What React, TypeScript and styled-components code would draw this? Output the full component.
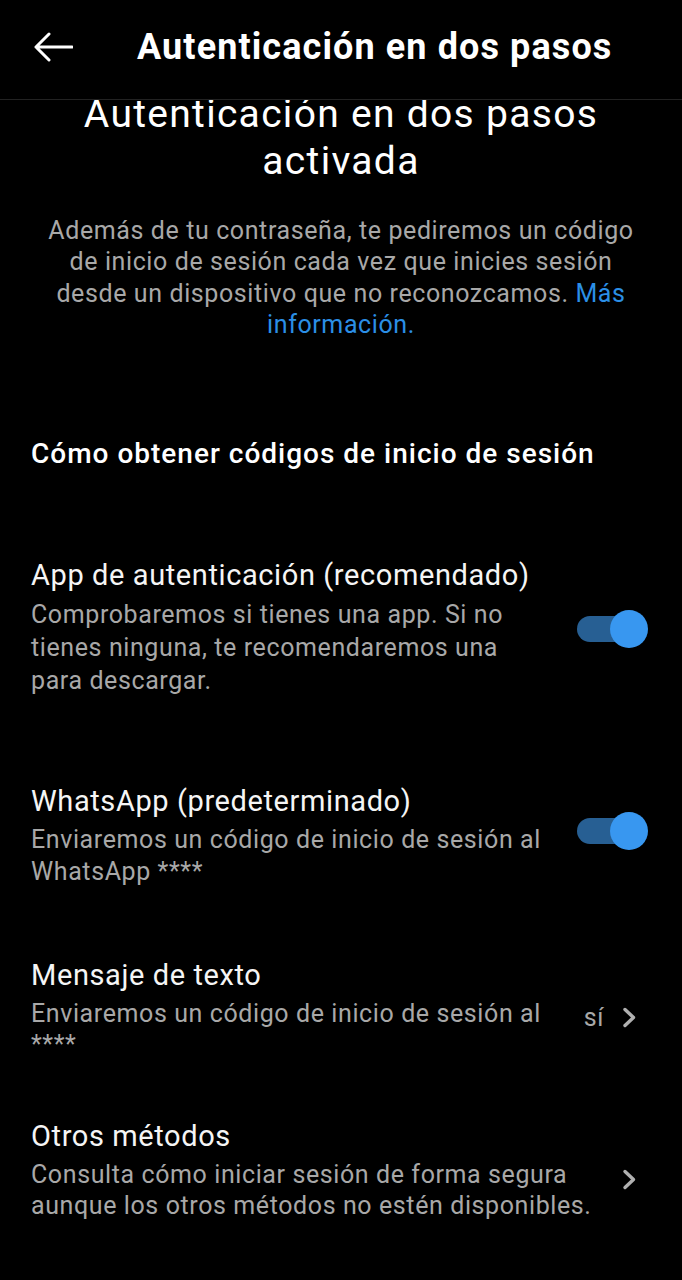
import React from "react";
import styled, { createGlobalStyle } from "styled-components";

const Global = createGlobalStyle`
  html, body { margin: 0; padding: 0; background: #000; }
  body { font-family: Roboto, "Noto Sans", Arial, sans-serif; -webkit-font-smoothing: antialiased; }
  * { box-sizing: border-box; }
`;

const Screen = styled.div`
  width: 682px;
  height: 1280px;
  background: #000;
  color: #f5f5f5;
  display: flex;
  flex-direction: column;
  overflow: hidden;
`;

const Header = styled.header`
  height: 100px;
  flex-shrink: 0;
  display: flex;
  align-items: center;
  padding: 0 0 6px 33px;
  border-bottom: 1px solid #222;
  position: relative;
  z-index: 1;
  background: #000;
`;

const BackButton = styled.button`
  width: 40px;
  height: 32px;
  padding: 0;
  border: 0;
  background: none;
  display: flex;
  align-items: center;
  justify-content: center;
  margin-right: 64px;
  cursor: pointer;
`;

const HeaderTitle = styled.h1`
  margin: 0;
  font-size: 36px;
  font-weight: 700;
  color: #fff;
  letter-spacing: 1.1px;
`;

const Content = styled.main`
  display: flex;
  flex-direction: column;
`;

const BigTitle = styled.h2`
  margin: -9px 0 0;
  font-size: 39px;
  line-height: 47px;
  font-weight: 400;
  letter-spacing: 1.3px;
  text-align: center;
  color: #fff;
`;

const Description = styled.p`
  margin: 30px 0 0;
  padding: 0 40px;
  font-size: 25px;
  line-height: 31.3px;
  letter-spacing: 0.6px;
  text-align: center;
  color: #a8a8a8;
`;

const Link = styled.a`
  color: #2b8fe6;
  text-decoration: none;
`;

const SectionHeading = styled.h3`
  margin: 97px 0 0;
  padding-left: 31px;
  font-size: 28px;
  line-height: 34px;
  font-weight: 500;
  letter-spacing: 1px;
  color: #fff;
`;

const Row = styled.div<{ $top: number }>`
  display: flex;
  align-items: center;
  gap: 26px;
  margin-top: ${(p) => p.$top}px;
  padding: 0 34px 0 31px;
`;

const RowText = styled.div`
  flex: 1;
  min-width: 0;
  display: flex;
  flex-direction: column;
`;

const RowTitle = styled.div`
  font-size: 29px;
  line-height: 36px;
  letter-spacing: 0.6px;
  color: #f5f5f5;
  margin-bottom: 5px;
`;

const RowSubtitle = styled.div<{ $lh: number }>`
  font-size: 25px;
  line-height: ${(p) => p.$lh}px;
  letter-spacing: 0.6px;
  color: #a8a8a8;
`;

const Accessory = styled.div<{ $shift: number; $inset?: number }>`
  flex-shrink: 0;
  display: flex;
  align-items: center;
  gap: 18px;
  margin-top: ${(p) => p.$shift * 2}px;
  margin-right: ${(p) => p.$inset ?? 0}px;
  color: #a8a8a8;
  font-size: 25px;
  letter-spacing: 0.6px;
`;

const ToggleWrap = styled.div`
  position: relative;
  width: 71px;
  height: 38px;
`;

const ToggleTrack = styled.div`
  position: absolute;
  left: 0;
  top: 6px;
  width: 62px;
  height: 26px;
  border-radius: 13px;
  background: #275f93;
`;

const ToggleKnob = styled.div`
  position: absolute;
  right: 0;
  top: 0;
  width: 38px;
  height: 38px;
  border-radius: 50%;
  background: #3897f0;
`;

const Chevron = styled.svg`
  display: block;
  width: 15px;
  height: 21px;
`;

const Toggle = () => (
  <ToggleWrap>
    <ToggleTrack />
    <ToggleKnob />
  </ToggleWrap>
);

const ChevronIcon = () => (
  <Chevron viewBox="0 0 15 21">
    <path d="M3 2.5 L11.5 10.5 L3 18.5" fill="none" stroke="#b0b0b0" strokeWidth="3.4" strokeLinecap="round" strokeLinejoin="round" />
  </Chevron>
);

export default function App() {
  return (
    <Screen>
      <Global />
      <Header>
        <BackButton aria-label="Atrás">
          <svg width="40" height="32" viewBox="0 0 40 32">
            <path d="M39 16 H3 M16 3 L3 16 L16 29" fill="none" stroke="#fff" strokeWidth="3" strokeLinecap="round" strokeLinejoin="round" />
          </svg>
        </BackButton>
        <HeaderTitle>Autenticación en dos pasos</HeaderTitle>
      </Header>
      <Content>
        <BigTitle>
          Autenticación en dos pasos
          <br />
          activada
        </BigTitle>
        <Description>
          Además de tu contraseña, te pediremos un código de inicio de sesión cada vez que inicies sesión desde un dispositivo que no reconozcamos.{" "}
          <Link href="#">Más información.</Link>
        </Description>
        <SectionHeading>Cómo obtener códigos de inicio de sesión</SectionHeading>

        <Row $top={86}>
          <RowText>
            <RowTitle>App de autenticación (recomendado)</RowTitle>
            <RowSubtitle $lh={33}>
              Comprobaremos si tienes una app. Si no tienes ninguna, te recomendaremos una para descargar.
            </RowSubtitle>
          </RowText>
          <Accessory $shift={2}>
            <Toggle />
          </Accessory>
        </Row>

        <Row $top={86}>
          <RowText>
            <RowTitle>WhatsApp (predeterminado)</RowTitle>
            <RowSubtitle $lh={32}>Enviaremos un código de inicio de sesión al WhatsApp ****</RowSubtitle>
          </RowText>
          <Accessory $shift={-5}>
            <Toggle />
          </Accessory>
        </Row>

        <Row $top={69}>
          <RowText>
            <RowTitle>Mensaje de texto</RowTitle>
            <RowSubtitle $lh={31}>Enviaremos un código de inicio de sesión al ****</RowSubtitle>
          </RowText>
          <Accessory $shift={9} $inset={11}>
            <span>sí</span>
            <ChevronIcon />
          </Accessory>
        </Row>

        <Row $top={58}>
          <RowText>
            <RowTitle>Otros métodos</RowTitle>
            <RowSubtitle $lh={31}>
              Consulta cómo iniciar sesión de forma segura aunque los otros métodos no estén disponibles.
            </RowSubtitle>
          </RowText>
          <Accessory $shift={10} $inset={11}>
            <ChevronIcon />
          </Accessory>
        </Row>
      </Content>
    </Screen>
  );
}
